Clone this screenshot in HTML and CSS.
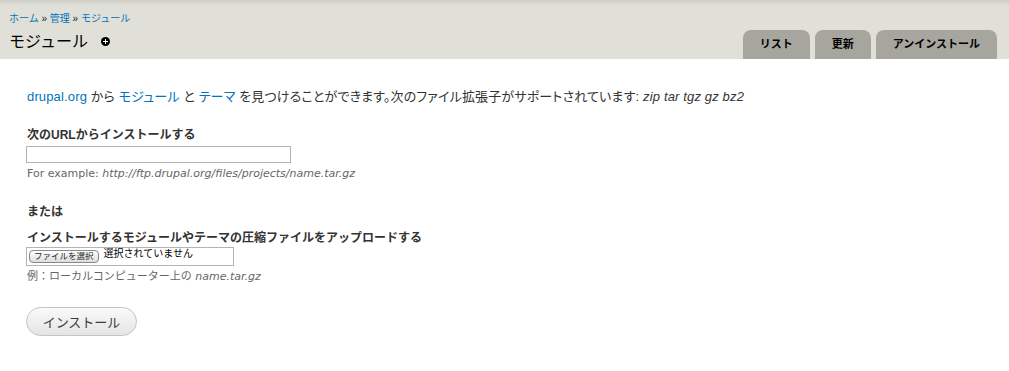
FILE: index.html
```html
<!DOCTYPE html>
<html lang="ja">
<head>
    <meta charset="UTF-8">
    <title>モジュール</title>
    <link rel="stylesheet" href="styles.css">
</head>
<body>
    <div class="header">
        <div class="header-left">
            <div class="breadcrumb">
                <a href="#">ホーム</a> » <a href="#">管理</a> » <a href="#">モジュール</a>
            </div>
            <h1 class="page-title">モジュール <span class="add-icon"></span></h1>
        </div>
        <ul class="tabs">
            <li><a href="#">リスト</a></li>
            <li><a href="#">更新</a></li>
            <li><a href="#">アンインストール</a></li>
        </ul>
    </div>

    <div class="content">
        <p class="intro"><a href="#">drupal.org</a> から <a href="#">モジュール</a> と <a href="#">テーマ</a> を見つけることができます。次のファイル拡張子がサポートされています: <em>zip tar tgz gz bz2</em></p>

        <div class="form-item">
            <label for="url">次のURLからインストールする</label>
            <input type="text" id="url" class="text-input">
            <div class="description">For example: <em>http://ftp.drupal.org/files/projects/name.tar.gz</em></div>
        </div>

        <div class="or">または</div>

        <div class="form-item">
            <label>インストールするモジュールやテーマの圧縮ファイルをアップロードする</label>
            <div class="file-input">
                <span class="file-button">ファイルを選択</span>
                <span class="file-status">選択されていません</span>
            </div>
            <div class="description">例：ローカルコンピューター上の <em>name.tar.gz</em></div>
        </div>

        <button class="submit">インストール</button>
    </div>
</body>
</html>
```

FILE: styles.css
```css
body {
    margin: 0;
    font-family: "Liberation Sans", "Noto Sans CJK JP", sans-serif;
    font-size: 13px;
    color: #333;
    background: #fff;
}
a {
    color: #0074bd;
    text-decoration: none;
}
.header {
    display: flex;
    justify-content: space-between;
    align-items: flex-end;
    height: 59px;
    padding: 0 12px 0 9px;
    background: linear-gradient(to bottom, #cfcfc8 0px, #e0e0d8 6px, #e0e0d8 100%);
}
.header-left {
    align-self: flex-start;
    padding-top: 12px;
}
.breadcrumb {
    font-size: 10px;
    line-height: 14px;
    color: #222;
}
.breadcrumb a {
    color: #0074bd;
}
.page-title {
    margin: 5px 0 0;
    font-size: 16px;
    font-weight: normal;
    line-height: 22px;
    color: #000;
}
.add-icon {
    display: inline-block;
    position: relative;
    width: 9px;
    height: 9px;
    margin-left: 9px;
    border-radius: 50%;
    background: #000;
    vertical-align: 1px;
}
.add-icon::before,
.add-icon::after {
    content: "";
    position: absolute;
    background: #fff;
}
.add-icon::before {
    left: 2px;
    top: 4px;
    width: 5px;
    height: 1px;
}
.add-icon::after {
    left: 4px;
    top: 2px;
    width: 1px;
    height: 5px;
}
.tabs {
    display: flex;
    gap: 5px;
    margin: 0;
    padding: 0;
    list-style: none;
}
.tabs li a {
    display: block;
    height: 29px;
    line-height: 29px;
    padding: 0 17px;
    background: #a6a69e;
    border-radius: 8px 8px 0 0;
    color: #000;
    font-size: 11px;
    font-weight: bold;
}
.content {
    padding: 24px 27px;
}
.intro {
    margin: 4px 0 20px;
    line-height: 20px;
    font-feature-settings: "palt";
    letter-spacing: 0.15px;
}
.intro em {
    font-style: italic;
}
.form-item {
    margin-bottom: 22px;
}
.form-item label {
    display: block;
    font-weight: bold;
    font-size: 12px;
    line-height: 16px;
    margin-bottom: 3px;
}
.text-input {
    display: block;
    width: 265px;
    height: 17px;
    box-sizing: border-box;
    margin: 0 0 0 -1px;
    border: 1px solid #b4b4b4;
    padding: 0 3px;
}
.description {
    font-family: "DejaVu Sans", "Noto Sans CJK JP", sans-serif;
    font-size: 11px;
    color: #666;
    margin-top: 3px;
    line-height: 16px;
}
.or {
    font-weight: bold;
    font-size: 12px;
    line-height: 16px;
    margin: 2px 0 10px;
}
.file-input {
    display: flex;
    align-items: flex-start;
    width: 208px;
    height: 19px;
    box-sizing: border-box;
    margin: -2px 0 3px -1px;
    border: 1px solid #b4b4b4;
    padding: 2px 0 0 2px;
}
.file-button {
    font-size: 8.5px;
    line-height: 11px;
    padding: 0 4px;
    border: 1px solid #888;
    border-radius: 4px;
    background: linear-gradient(#fff, #ddd);
    color: #222;
}
.file-status {
    font-size: 10px;
    line-height: 11px;
    margin-left: 5px;
    margin-top: -2px;
    color: #000;
}
.submit {
    display: block;
    width: 111px;
    height: 29px;
    margin: 0 0 0 -1px;
    border: 1px solid #c4c4c4;
    border-radius: 15px;
    background: linear-gradient(#fafafa, #e4e4e4);
    font-family: inherit;
    font-size: 13px;
    color: #3a3a3a;
}
```
